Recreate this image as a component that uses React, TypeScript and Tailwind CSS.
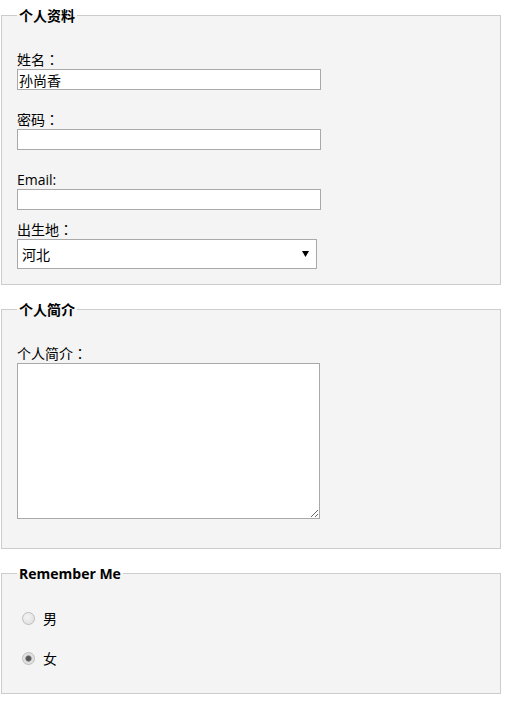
import { useState } from 'react'

const font = "font-['Open_Sans','Noto_Sans_CJK_SC',sans-serif]"

function Legend({ children }: { children: React.ReactNode }) {
  return (
    <legend className="px-[2px] text-[14px] leading-[17px] font-bold text-black">
      {children}
    </legend>
  )
}

function Label({ children, className = '' }: { children: React.ReactNode; className?: string }) {
  return <label className={`block h-[19px] text-[14px] leading-[19px] text-black ${className}`}>{children}</label>
}

// full-width colon, centred like the reference
const Colon = () => <span className="font-['Noto_Sans_CJK_TC',sans-serif]">：</span>

const inputCls =
  'block w-[304px] h-[21px] border border-[#a9a9a9] bg-white px-[1px] text-[14px] leading-[19px] text-black outline-none'

const radioCls =
  'appearance-none m-0 size-[13px] rounded-full border border-[#bdbdbd] bg-[radial-gradient(circle_at_40%_35%,#f4f4f4_0,#dcdcdc_100%)] checked:bg-[radial-gradient(circle,#505050_0,#606060_2.5px,#dcdcdc_3.5px,#ececec_100%)]'

export default function App() {
  const [sex, setSex] = useState('female')

  return (
    <div className={`min-h-[703px] bg-white pt-[7px] ${font}`}>
      {/* 个人资料 */}
      <fieldset className="ml-[1px] w-[500px] border border-[#cccccc] bg-[#f4f4f4] px-[15px] pb-[15px]">
        <Legend>个人资料</Legend>
        <Label className="mt-[26px]">姓名<Colon /></Label>
        <input className={inputCls} defaultValue="孙尚香" />
        <Label className="mt-[20px]">密码<Colon /></Label>
        <input type="password" className={inputCls} />
        <Label className="mt-[20px]">Email:</Label>
        <input type="email" className={inputCls} />
        <Label className="mt-[10px]">出生地<Colon /></Label>
        <div className="relative w-[300px]">
          <select className="block w-[300px] h-[30px] appearance-none border border-[#a9a9a9] bg-white pl-[4px] text-[14px] text-black outline-none">
            <option>河北</option>
            <option>河南</option>
            <option>山东</option>
          </select>
          <svg className="pointer-events-none absolute right-[8px] top-[12px]" width="7" height="6" viewBox="0 0 7 6">
            <path d="M0 0 H7 L3.5 6 Z" fill="#000" />
          </svg>
        </div>
      </fieldset>

      {/* 个人简介 */}
      <fieldset className="ml-[1px] mt-[16px] w-[500px] border border-[#cccccc] bg-[#f4f4f4] px-[15px] pb-[29px]">
        <Legend>个人简介</Legend>
        <Label className="mt-[26px]">个人简介<Colon /></Label>
        <textarea className="block w-[303px] h-[156px] border border-[#a9a9a9] bg-white text-[14px] outline-none" />
      </fieldset>

      {/* Remember Me */}
      <fieldset className="ml-[1px] mt-[16px] w-[500px] border border-[#cccccc] bg-[#f4f4f4] px-[15px] pb-[25px]">
        <Legend>Remember Me</Legend>
        <label className="mt-[26px] flex h-[20px] items-center text-[14px] text-black">
          <input
            type="radio"
            name="sex"
            className={`ml-[5px] mr-[8px] ${radioCls}`}
            checked={sex === 'male'}
            onChange={() => setSex('male')}
          />
          男
        </label>
        <label className="mt-[20px] flex h-[20px] items-center text-[14px] text-black">
          <input
            type="radio"
            name="sex"
            className={`ml-[5px] mr-[8px] ${radioCls}`}
            checked={sex === 'female'}
            onChange={() => setSex('female')}
          />
          女
        </label>
      </fieldset>
    </div>
  )
}
